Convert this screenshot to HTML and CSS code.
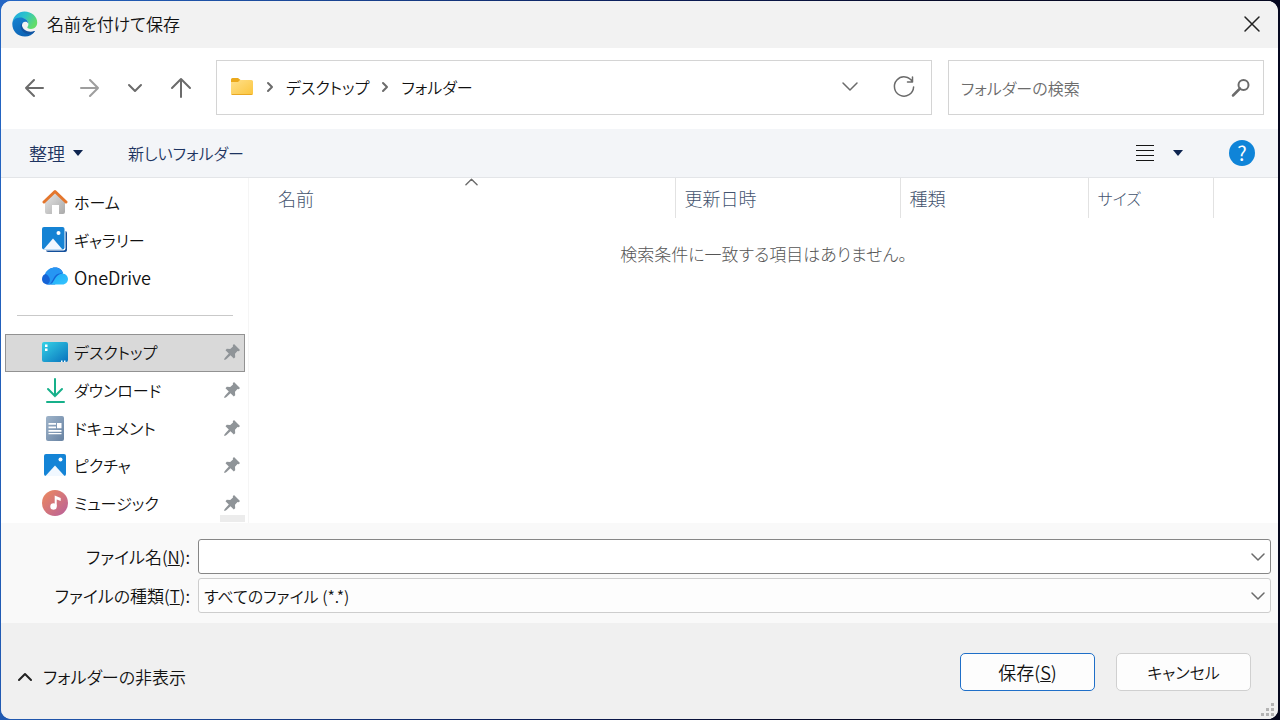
FILE: index.html
```html
<!DOCTYPE html>
<html lang="ja">
<head>
<meta charset="utf-8">
<meta name="viewport" content="width=device-width, initial-scale=1">
<title>名前を付けて保存</title>
<link rel="stylesheet" href="styles.css">
</head>
<body class="desktop">
<form class="dialog">
  <header class="titlebar">
    <svg class="icon26" viewBox="0 0 26 26" aria-hidden="true">
      <defs>
        <linearGradient id="eg1" x1="0" y1="0" x2="1" y2="0.5"><stop offset="0" stop-color="#1ea3e2"/><stop offset=".5" stop-color="#2cc3cb"/><stop offset="1" stop-color="#62dc6a"/></linearGradient>
        <linearGradient id="eg2" x1="0" y1="0" x2=".6" y2="1"><stop offset="0" stop-color="#1683d1"/><stop offset="1" stop-color="#0c62b4"/></linearGradient>
      </defs>
      <path fill="url(#eg1)" d="M.5 11C1.500 4.600 6.500.4 12.500.4c7.300 0 12.700 5 12.700 11.100 0 4-2.800 6.400-6.200 6.400-3 0-4-1.200-3.600-2 .8-1 1-1.900 1-3C16.400 9.500 13 7 9 7c-3.700 0-6.500 1.500-8.500 4z"/>
      <path fill="url(#eg2)" d="M.3 13C.3 9.500 3.500 6.600 8 6.600c4.400 0 8 2.600 8.400 5.900-1-1.300-2.100-1.700-3.200-1.700-1.900 0-3.200 1.600-3.200 3.600 0 4.300 4 7.300 8.500 7 1.500-.1 3-.4 4.500-1.200-2.300 3.500-6 5.400-10 5.400C5.500 25.600.3 20 .3 13z"/>
      <path fill="#1254a0" d="M9.800 11.800c-3 4.200 0 10 5.700 11.100 3 .5 5.300-.7 7-2.200.6-.4.500-.9-.2-.7-5.600 2-11.300-1-12.300-5-.2-1-.4-2.200-.2-3.200z"/>
    </svg>
    <h1 class="title">名前を付けて保存</h1>
    <button type="button" class="plain close" aria-label="閉じる"><svg class="icon18" viewBox="0 0 18 18"><path class="line dark thin" d="M2 2l14 14M16 2L2 16"/></svg></button>
  </header>

  <div class="navbar">
    <div class="history">
      <button type="button" class="plain" aria-label="戻る"><svg class="icon24" viewBox="0 0 24 24"><path class="line" d="M20 12H3M11 4l-8 8 8 8"/></svg></button>
      <button type="button" class="plain faded forward" aria-label="進む"><svg class="icon24" viewBox="0 0 24 24"><path class="line" d="M4 12h17M13 4l8 8-8 8"/></svg></button>
      <button type="button" class="plain" aria-label="最近の場所"><svg class="icon24" viewBox="0 0 24 24"><path class="line" d="M6 9l6 6 6-6"/></svg></button>
      <button type="button" class="plain" aria-label="上へ"><svg class="icon24" viewBox="0 0 24 24"><path class="line" d="M12 21V3M3 12l9-9 9 9"/></svg></button>
    </div>
    <div class="address">
      <svg class="icon24" viewBox="0 0 24 24" aria-hidden="true">
        <defs><linearGradient id="fo" x1="0" y1="0" x2="1" y2="1"><stop offset="0" stop-color="#ffe08a"/><stop offset="1" stop-color="#fbc53d"/></linearGradient></defs>
        <path fill="#eba91c" d="M1 4.500Q1 3 2.500 3H8l2.500 2H21v5H1z"/><path fill="url(#fo)" d="M1 7h7l2-2h11.500Q23 5 23 6.500v12q0 1.500-1.500 1.500h-19Q1 20 1 18.500z"/><path fill="#e9a823" d="M1.500 19h21q-.4 1-1.500 1H2.500q-1 0-1-1z"/>
      </svg>
      <svg class="crumb-arrow" viewBox="0 0 10 14" aria-hidden="true"><path class="line" d="M3 3l4 4-4 4"/></svg>
      <button type="button" class="plain crumb">デスクトップ</button>
      <svg class="crumb-arrow" viewBox="0 0 10 14" aria-hidden="true"><path class="line" d="M3 3l4 4-4 4"/></svg>
      <button type="button" class="plain crumb">フォルダー</button>
      <div class="address-tools">
        <button type="button" class="plain" aria-label="以前の場所"><svg class="icon24" viewBox="0 0 24 24"><path class="line thin" d="M5 8l7 7 7-7"/></svg></button>
        <button type="button" class="plain" aria-label="最新の情報に更新"><svg class="icon24" viewBox="0 0 24 24"><path class="line thin" d="M20.500 2v5h-5M20.500 7A9.600 9.600 0 1 0 21.600 12"/></svg></button>
      </div>
    </div>
    <div class="search">
      <input class="search-input" type="text" placeholder="フォルダーの検索" aria-label="フォルダーの検索">
      <button type="button" class="plain" aria-label="検索"><svg class="icon20" viewBox="0 0 20 20"><circle class="line" cx="12.500" cy="7" r="5"/><path class="line bold" d="M9 10.500l-7 7"/></svg></button>
    </div>
  </div>

  <div class="toolbar">
    <button type="button" class="plain command arrange">整理<svg class="triangle" viewBox="0 0 10 6"><path d="M0 0h10L5 6z"/></svg></button>
    <button type="button" class="plain command">新しいフォルダー</button>
    <div class="toolbar-end">
      <button type="button" class="plain" aria-label="表示"><svg class="icon18" viewBox="0 0 18 18"><path stroke="#151515" d="M0 1.500h18M0 6.500h18M0 11.500h18M0 16.500h18"/></svg></button>
      <button type="button" class="plain" aria-label="表示の変更"><svg class="triangle" viewBox="0 0 10 6"><path d="M0 0h10L5 6z"/></svg></button>
      <button type="button" class="plain help" aria-label="ヘルプ">?</button>
    </div>
  </div>

  <main class="browser">
    <nav class="sidebar" aria-label="場所">
      <a class="place" href="#home"><svg class="icon26" viewBox="0 0 26 26"><defs><linearGradient id="ho" x1="0" y1="0" x2="1" y2="1"><stop offset="0" stop-color="#e8e8e8"/><stop offset="1" stop-color="#a9a9a9"/></linearGradient></defs><path fill="url(#ho)" d="M3 12L13 3l10 9v11q0 2-2 2h-4v-9H10v9H5q-2 0-2-2z"/><path d="M2 13L13 2.500 24 13" fill="none" stroke="#e4762d" stroke-width="3" stroke-linecap="round" stroke-linejoin="round"/></svg><span>ホーム</span></a>
      <a class="place" href="#gallery"><svg class="icon26" viewBox="0 0 26 26"><rect x="4" y="4" width="21" height="21" rx="2" fill="#124f9b"/><rect x="0" y="0" width="23.500" height="23.500" rx="2" fill="#fff"/><rect x="0" y="0" width="22.500" height="22.500" rx="2" fill="#1583d4"/><circle cx="16.500" cy="6" r="2" fill="#fff"/><path fill="#f1f8ff" d="M1.500 22.500L11 11.500l9.500 11z"/></svg><span>ギャラリー</span></a>
      <a class="place latin" href="#onedrive"><svg class="icon26" viewBox="0 0 26 26"><defs><linearGradient id="od" x1="0" y1="0" x2="1" y2="1"><stop offset="0" stop-color="#1ba8f5"/><stop offset="1" stop-color="#36c5ff"/></linearGradient></defs><path fill="#1563d6" d="M6 20.500c-3.500 0-6-2.300-6-5.500 0-3 2-5 4.500-5.500C6 5.500 9.500 3.500 13 3.500c4 0 7 2 8 5.500l-8 11.500z"/><path fill="#2696f3" d="M3 9.800C5 5.500 9 3.500 13 3.500c4 0 7 2.500 8 6-5-1-8 1.500-9.500 5L8 20.500H5c5-2 3-9.500-2-10.700z"/><path fill="url(#od)" d="M7 20.500c3 0 4-2.500 5.500-5C14.500 12 17 9.500 20.500 9.500c3 .3 5.500 2.500 5.500 5.500s-2.500 5.500-5.500 5.500z"/></svg><span>OneDrive</span></a>
      <hr class="divider">
      <a class="place selected" href="#desktop" aria-current="page"><svg class="icon26" viewBox="0 0 26 26"><defs><linearGradient id="de" x1="0" y1="0" x2="1" y2="1"><stop offset="0" stop-color="#36d2e6"/><stop offset="1" stop-color="#0872bd"/></linearGradient></defs><rect y="3" width="26" height="20" rx="2" fill="url(#de)"/><path fill="#fff" d="M3 5.500h2.500V8H3zM3 9.500h2.500V12H3zM19 21.500h1.500V23H19zM22 21.500h1.500V23H22z"/></svg><span>デスクトップ</span><svg class="pin" viewBox="0 0 16 16"><path d="M10 0l6 6-1.200 1.200-1.300-.2-2.500 2.800.2 3.400-1.400 1.300-3.300-3.300-4 3.800L.8 16 0 15.200l1.200-1.800 3.600-4L1.500 6.200l1.300-1.400 3.400.2L9 2.500 8.800 1.200z"/></svg></a>
      <a class="place" href="#downloads"><svg class="icon26" viewBox="0 0 26 26"><path fill="none" stroke="#16b08a" stroke-width="2" stroke-linecap="round" d="M13 2v17M6 12l7 7 7-7M5 25h17"/></svg><span>ダウンロード</span><svg class="pin" viewBox="0 0 16 16"><path d="M10 0l6 6-1.200 1.200-1.300-.2-2.500 2.800.2 3.400-1.400 1.300-3.300-3.300-4 3.800L.8 16 0 15.200l1.200-1.800 3.600-4L1.500 6.200l1.300-1.400 3.400.2L9 2.500 8.800 1.200z"/></svg></a>
      <a class="place" href="#documents"><svg class="icon26" viewBox="0 0 26 26"><defs><linearGradient id="do" x1="0" y1="0" x2="1" y2="1"><stop offset="0" stop-color="#9fb4ca"/><stop offset="1" stop-color="#6782a2"/></linearGradient></defs><rect x="4" y="1" width="18" height="25" rx="2" fill="url(#do)"/><path fill="#fff" d="M6.500 8H14v1.800H6.500zM6.500 11.500H14v1.800H6.500zM15 8h4.500v5.300H15zM6.500 15h13v1.800h-13zM6.500 18h13v1.300h-13z"/></svg><span>ドキュメント</span><svg class="pin" viewBox="0 0 16 16"><path d="M10 0l6 6-1.200 1.200-1.300-.2-2.500 2.800.2 3.400-1.400 1.300-3.300-3.300-4 3.800L.8 16 0 15.200l1.200-1.800 3.600-4L1.500 6.200l1.300-1.400 3.400.2L9 2.500 8.800 1.200z"/></svg></a>
      <a class="place" href="#pictures"><svg class="icon26" viewBox="0 0 26 26"><rect x="2" y="2" width="22" height="22" rx="2" fill="#1484d6"/><circle cx="18.500" cy="7.500" r="2" fill="#fff"/><path fill="#f1f8ff" d="M3.500 24L13 13.500 22.500 24z"/></svg><span>ピクチャ</span><svg class="pin" viewBox="0 0 16 16"><path d="M10 0l6 6-1.200 1.200-1.300-.2-2.500 2.800.2 3.400-1.400 1.300-3.300-3.300-4 3.800L.8 16 0 15.200l1.200-1.800 3.600-4L1.500 6.200l1.300-1.400 3.400.2L9 2.500 8.800 1.200z"/></svg></a>
      <a class="place" href="#music"><svg class="icon26" viewBox="0 0 26 26"><defs><linearGradient id="mu" x1="0" y1="0" x2="1" y2="1"><stop offset="0" stop-color="#ee8a5c"/><stop offset="1" stop-color="#b8609c"/></linearGradient></defs><circle cx="13" cy="13" r="13" fill="url(#mu)"/><circle cx="11.500" cy="16.500" r="3.200" fill="#fff"/><path fill="#fff" d="M12.700 5.500l6 2.500v3l-4-1.600v7.100h-2z"/></svg><span>ミュージック</span><svg class="pin" viewBox="0 0 16 16"><path d="M10 0l6 6-1.200 1.200-1.300-.2-2.500 2.800.2 3.400-1.400 1.300-3.300-3.300-4 3.800L.8 16 0 15.200l1.200-1.800 3.600-4L1.500 6.200l1.300-1.400 3.400.2L9 2.500 8.800 1.200z"/></svg></a>
      <span class="scroll-end"></span>
    </nav>
    <table class="files">
      <colgroup><col><col class="col-date"><col class="col-type"><col class="col-size"><col class="col-rest"></colgroup>
      <thead>
        <tr>
          <th class="name-head" scope="col" aria-sort="ascending">名前<svg class="sort" viewBox="0 0 14 8" aria-hidden="true"><path class="line thin" d="M1 7l6-6 6 6"/></svg></th>
          <th scope="col">更新日時</th><th scope="col">種類</th><th class="kana" scope="col">サイズ</th><td></td>
        </tr>
      </thead>
      <tbody><tr><td class="empty" colspan="5">検索条件に一致する項目はありません。</td></tr></tbody>
    </table>
  </main>

  <section class="fields">
    <label class="field-label" for="filename">ファイル名(<u>N</u>):</label>
    <div class="combo active">
      <input class="combo-control" id="filename" type="text">
      <svg class="chevron" viewBox="0 0 14 10" aria-hidden="true"><path class="line thin" d="M1 2l6 6 6-6"/></svg>
    </div>
    <label class="field-label" for="filetype">ファイルの種類(<u>T</u>):</label>
    <div class="combo">
      <select class="combo-control" id="filetype"><option>すべてのファイル (*.*)</option></select>
      <svg class="chevron" viewBox="0 0 14 10" aria-hidden="true"><path class="line thin" d="M1 2l6 6 6-6"/></svg>
    </div>
  </section>

  <footer class="footer">
    <button type="button" class="plain toggle"><svg class="chevron-up" viewBox="0 0 14 10"><path class="line dark" d="M1 8l6-6 6 6"/></svg>フォルダーの非表示</button>
    <div class="actions">
      <button type="button" class="action primary">保存(<u>S</u>)</button>
      <button type="button" class="action kana">キャンセル</button>
    </div>
    <svg class="grip" viewBox="0 0 14 14" aria-hidden="true"><path fill="#b4b4b4" d="M10 0h3v3h-3zM5 5h3v3H5zM10 5h3v3h-3zM0 10h3v3H0zM5 10h3v3H5zM10 10h3v3h-3z"/></svg>
  </footer>
</form>
</body>
</html>
```

FILE: styles.css
```css
* { box-sizing: border-box; }

.desktop {
  margin: 0;
  min-height: 100vh;
  padding: 1px 2px 2px 1px;
  display: flex;
  background: linear-gradient(100deg, #2466c4 0%, #1c4a9b 20%, #0c1f5c 45%, #070b2b 65%, #05071c 100%);
  color: #111;
  font-family: "Noto Sans CJK JP", "Noto Sans", sans-serif;
  font-size: 18px;
  font-weight: 350;
  line-height: 24px;
  font-feature-settings: "palt";
}

.dialog {
  flex: 1;
  min-width: 0;
  display: flex;
  flex-direction: column;
  overflow: hidden;
  border-radius: 10px;
  background: #fff;
}

button, input, select { font: inherit; font-feature-settings: inherit; color: inherit; }
svg { display: block; flex: none; }

.plain {
  display: flex;
  align-items: center;
  justify-content: center;
  padding: 0;
  border: 0;
  background: none;
  white-space: nowrap;
}

.line { fill: none; stroke: #6b6b6b; stroke-width: 2; stroke-linecap: round; stroke-linejoin: round; }
.line.dark { stroke: #222; }
.line.thin { stroke-width: 1.5; }
.line.bold { stroke-width: 2.5; }
.faded { opacity: .65; }
.icon18 { width: 18px; height: 18px; }
.icon20 { width: 20px; height: 20px; }
.icon24 { width: 24px; height: 24px; }
.icon26 { width: 26px; height: 26px; }

.titlebar {
  display: flex;
  align-items: center;
  gap: 9px;
  height: 47px;
  padding: 0 17px 2px 11px;
  background: #f2f2f2;
}
.title { margin: 0; font-size: 17px; font-weight: 350; }
.close { margin-left: auto; }

.navbar {
  display: flex;
  gap: 16px;
  padding: 12px 14px 14px 22px;
}
.history { display: flex; gap: 22px; width: 177px; }
.forward { margin-left: 8px; }
.address {
  flex: 1;
  min-width: 0;
  display: flex;
  align-items: center;
  gap: 11px;
  height: 55px;
  padding: 0 15px 2px 13px;
  border: 1px solid #d4d4d4;
}
.crumb { font-size: 16px; }
.crumb-arrow { width: 10px; height: 14px; }
.address-tools { display: flex; gap: 30px; margin-left: auto; }
.search {
  flex: none;
  width: 316px;
  display: flex;
  align-items: center;
  padding: 0 12px;
  border: 1px solid #d4d4d4;
}
.search-input { flex: 1; min-width: 0; padding: 0; border: 0; outline: 0; font-size: 16px; }
.search-input::placeholder { color: #6c6c6c; opacity: 1; }

.toolbar {
  display: flex;
  align-items: center;
  gap: 45px;
  height: 49px;
  padding: 0 23px 0 28px;
  border-bottom: 1px solid #e3e5e8;
  background: #f3f5f8;
  color: #1d3461;
}
.command { font-size: 16px; }
.arrange { gap: 8px; font-size: 18px; }
.triangle { width: 10px; height: 6px; fill: #0d2450; }
.toolbar-end { display: flex; align-items: center; gap: 19px; margin-left: auto; }
.help {
  width: 26px;
  height: 26px;
  margin-left: 27px;
  border-radius: 50%;
  background: #0f84d8;
  color: #fff;
  font-size: 20px;
  font-weight: 400;
}

.browser { flex: 1; display: flex; min-height: 345px; }
.sidebar {
  position: relative;
  width: 248px;
  display: grid;
  grid-auto-rows: 1fr;
  padding: 6px 3px 1px 4px;
  border-right: 1px solid #f5f5f5;
}
.place {
  display: flex;
  align-items: center;
  gap: 6px;
  padding: 0 4px 1px 36px;
  border: 1px solid transparent;
  color: inherit;
  font-size: 16px;
  text-decoration: none;
}
.latin { font-size: 18px; }
.selected { border-color: #929292; background: #d9d9d9; }
.pin { width: 16px; height: 16px; margin-left: auto; fill: #8f9498; }
.divider { align-self: center; width: auto; margin: 0 12px; border: 0; border-top: 1px solid #c9c9c9; }
.scroll-end { position: absolute; right: 3px; bottom: 1px; width: 25px; height: 7px; background: #ececec; }

.files { flex: 1; align-self: flex-start; border-collapse: collapse; table-layout: fixed; width: 100%; min-width: 0; }
.files th {
  position: relative;
  height: 40px;
  padding: 0 9px;
  border-right: 1px solid #e2e2e2;
  color: #43536e;
  font-weight: 300;
  text-align: left;
}
.files .name-head { padding-left: 29px; }
.sort { position: absolute; top: 0; left: 216px; width: 13px; height: 8px; }
.col-date { width: 225px; }
.col-type { width: 188px; }
.col-size { width: 125px; }
.col-rest { width: 65px; }
.empty { padding: 24px 0; color: #555; font-size: 17px; font-weight: 300; text-align: center; }

.fields {
  display: grid;
  grid-template-columns: 189px 1fr;
  align-items: center;
  gap: 4px 8px;
  padding: 16px 7px 10px 0;
  background: #f9f9f9;
}
.field-label { font-size: 17px; text-align: right; white-space: nowrap; }
.combo { position: relative; height: 35px; border: 1px solid #cdcdcd; border-radius: 3px; background: #fdfdfd; }
.combo.active { border-color: #868686; background: #fff; }
.combo-control {
  width: 100%;
  height: 100%;
  padding: 0 30px 0 5px;
  border: 0;
  outline: 0;
  appearance: none;
  background: transparent;
  font-size: 16px;
}
.chevron { position: absolute; top: 12px; right: 5px; width: 14px; height: 10px; pointer-events: none; }

.footer {
  position: relative;
  display: flex;
  align-items: center;
  justify-content: space-between;
  height: 96px;
  padding: 2px 27px 0 17px;
  background: #f0f0f0;
}
.toggle { gap: 11px; margin-top: 10px; font-size: 17px; }
.chevron-up { width: 14px; height: 10px; }
.actions { display: flex; gap: 21px; }
.action {
  width: 135px;
  height: 38px;
  padding: 0;
  border: 1px solid #d0d0d0;
  border-radius: 5px;
  background: #fdfdfd;
}
.primary { border-color: #1f6fc8; }
.kana { font-size: 16px; }
.grip { position: absolute; right: 3px; bottom: 2px; width: 14px; height: 14px; }
```
